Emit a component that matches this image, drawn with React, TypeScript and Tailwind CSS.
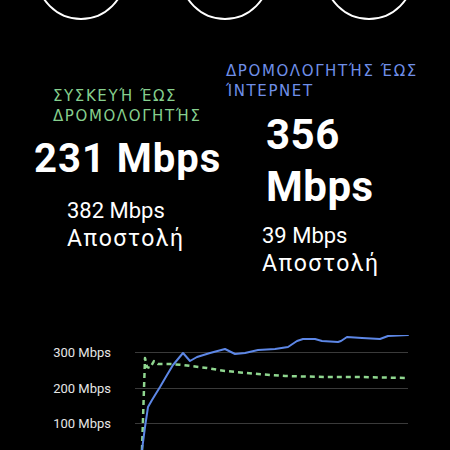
import React from "react";

const blue =
  "M142,450 L145,427 L148,407 L152,400 L160,387 L167,375 L173,365 L183,353 L190,361 L197,357 L210,353 L225,349 L235,354 L245,353 L258,350 L275,349 L288,347 L297,341 L303,339 L315,339 L322,341 L338,342 L341,341 L347,337 L362,338 L380,339 L388,336 L408,335";
const green =
  "M142,450 L145,358 L147,367 L150,368 L154,361 L158,364 L170,364 L183,365 L207,368 L225,371 L258,374 L285,376 L325,377 L358,377 L408,378";

const rows = ["300 Mbps", "200 Mbps", "100 Mbps"];

const labelFont = { fontFamily: "'DejaVu Sans', sans-serif" };

const App: React.FC = () => {
  return (
    <div
      className="w-[450px] h-[450px] overflow-hidden bg-black text-white"
      style={{ fontFamily: "Roboto, 'Noto Sans', sans-serif" }}
    >
      {/* ring buttons, cut off at the top */}
      <div className="flex justify-center gap-[54px] mt-[-70px]">
        <div className="w-[90px] h-[90px] rounded-full border-2 border-white" />
        <div className="w-[90px] h-[90px] rounded-full border-2 border-white" />
        <div className="w-[90px] h-[90px] rounded-full border-2 border-white" />
      </div>

      <div className="flex">
        <div className="w-[225px] flex flex-col items-start pt-[66px]">
          <div
            className="pl-[53px] text-[15px] leading-5 tracking-[1.6px] text-[#86cf8e]"
            style={labelFont}
          >
            <div>ΣΥΣΚΕΥΉ ΈΩΣ</div>
            <div>ΔΡΟΜΟΛΟΓΗΤΉΣ</div>
          </div>
          <div className="pl-[34px] mt-[13px] text-[40px] leading-[40px] font-bold tracking-[1px]">
            231 Mbps
          </div>
          <div className="pl-[67px] mt-[18px] text-[22px] leading-7">
            <div>382 Mbps</div>
            <div className="text-[23px] tracking-[1.5px]">Αποστολή</div>
          </div>
        </div>

        <div className="w-[225px] flex flex-col items-start pt-[41px]">
          <div
            className="pl-[1px] text-[15px] leading-5 tracking-[1.6px] text-[#6f8fe9]"
            style={labelFont}
          >
            <div>ΔΡΟΜΟΛΟΓΗΤΉΣ ΈΩΣ</div>
            <div>ΊΝΤΕΡΝΕΤ</div>
          </div>
          <div className="pl-[41px] mt-[8px] text-[42px] leading-[52px] font-bold tracking-[0.5px]">
            <div>356</div>
            <div>Mbps</div>
          </div>
          <div className="pl-[37px] mt-[9px] text-[22px] leading-7">
            <div>39 Mbps</div>
            <div className="text-[23px] tracking-[1.5px]">Αποστολή</div>
          </div>
        </div>
      </div>

      {/* chart */}
      <div className="relative mt-[57px]">
        {rows.map((label) => (
          <div key={label} className="flex items-center h-[35.5px]">
            <div className="w-[111px] text-right text-[13px] text-[#e6e6e6]">
              {label}
            </div>
            <div className="ml-[24px] w-[273px] h-px bg-[#3a3a3a]" />
          </div>
        ))}
        <svg
          className="absolute left-0 top-0"
          width="450"
          height="142"
          viewBox="0 335 450 142"
          fill="none"
        >
          <path
            d={green}
            stroke="#8fd68f"
            strokeWidth="2.5"
            strokeDasharray="5 4"
            strokeLinejoin="round"
          />
          <path
            d={blue}
            stroke="#5d87e6"
            strokeWidth="2"
            strokeLinejoin="round"
            strokeLinecap="round"
          />
        </svg>
      </div>
    </div>
  );
};

export default App;
